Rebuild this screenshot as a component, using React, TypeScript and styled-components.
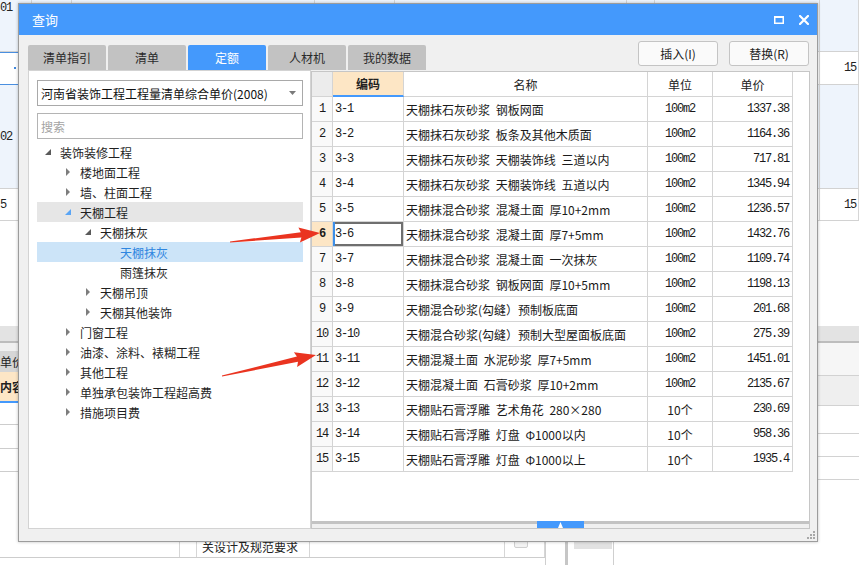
import styled, { createGlobalStyle } from "styled-components";

const MONO = `"Liberation Mono", "DejaVu Sans Mono", monospace`;
const CJK = `"Noto Sans CJK SC", "Noto Sans", sans-serif`;
const BLUE = "#4499fc";

const GlobalStyle = createGlobalStyle`
  html, body { margin: 0; padding: 0; background: #fff; }
  body {
    font-family: ${CJK};
    font-size: 12px;
    color: #1f1f1f;
  }
  * { box-sizing: border-box; }
  input::placeholder { color: #a3a3a3; }
`;

const Screen = styled.div`
  position: relative;
  width: 859px;
  height: 565px;
  overflow: hidden;
  background: #fff;
`;

/* ---------- the app behind the dialog ---------- */

const BgRow = styled.div<{ $h: number; $bg?: string }>`
  display: flex;
  height: ${p => p.$h}px;
  background: ${p => p.$bg || "#fff"};
  border-bottom: 1px solid #d2d2d2;
`;

const BgCell = styled.div<{ $w: number; $align?: string; $top?: boolean; $sel?: boolean }>`
  flex: 0 0 ${p => p.$w}px;
  display: flex;
  align-items: ${p => (p.$top ? "flex-start" : "center")};
  justify-content: ${p => p.$align || "flex-start"};
  padding: ${p => (p.$top ? "1px 2px 0 0" : "0 2px 0 0")};
  border-right: 1px solid #d6d6d6;
  font-family: ${MONO};
  font-size: 12px;
  letter-spacing: -1.2px;
  color: #222;
  overflow: hidden;
  white-space: nowrap;
  ${p => p.$sel && "box-shadow: inset 0 1px 0 #4a8fe0, 0 1px 0 #4a8fe0;"}
`;

const BlueDot = styled.i`
  display: block;
  width: 2px;
  height: 2px;
  margin: 0 0 0 14px;
  background: #3d86dc;
`;

const Spacer = styled.div<{ $h: number }>`
  height: ${p => p.$h}px;
`;

const Band = styled.div`
  height: 17px;
  background: #e3e3e3;
  border-bottom: 2px solid #bdbdbd;
`;

const Lower = styled.div`
  display: flex;
  height: 222px;
`;

const LeftPane = styled.div`
  flex: 0 0 546px;
  display: flex;
  flex-direction: column;
  border-right: 1px solid #cfcfcf;
`;

const PaneStrip = styled.div`
  height: 8px;
  background: #f0f0f0;
`;

const PaneHead = styled.div<{ $kind: "tab" | "col" }>`
  display: flex;
  align-items: center;
  height: ${p => (p.$kind === "tab" ? 21 : 31)}px;
  background: ${p => (p.$kind === "tab" ? "#d6d6d6" : "#fde6c6")};
  border-bottom: ${p => (p.$kind === "tab" ? "none" : `2px solid ${BLUE}`)};
  font-size: 12px;
  font-weight: ${p => (p.$kind === "tab" ? 400 : 700)};
  color: #222;
`;

const LRow = styled.div<{ $h: number }>`
  display: flex;
  height: ${p => p.$h}px;
  align-items: stretch;
  border-bottom: 1px solid #cdcdcd;
`;

const LCell = styled.div<{ $w: number; $end?: boolean }>`
  flex: 0 0 ${p => p.$w}px;
  display: flex;
  align-items: ${p => (p.$end ? "flex-end" : "center")};
  padding: 0 0 2px 5px;
  border-right: 1px solid #d6d6d6;
  font-size: 12px;
  color: #222;
  white-space: nowrap;
  overflow: hidden;
`;

const MiniBtn = styled.div`
  width: 14px;
  height: 14px;
  margin: 0 0 7px 4px;
  border: 1px solid #cfcfcf;
  border-radius: 2px;
  background: #f3f3f3;
`;

const Gutter = styled.div`
  flex: 0 0 19px;
`;

const VLine = styled.div`
  flex: 0 0 3px;
  background: #c6c6c6;
`;

const ScrollCol = styled.div`
  flex: 0 0 46px;
  padding: 0 1px 0 6px;
  border-right: 1px solid #cfcfcf;
`;

const Thumb = styled.div`
  height: 206px;
  background: #e2e2e2;
`;

const RightPane = styled.div`
  flex: 1;
  display: flex;
  flex-direction: column;
`;

/* ---------- dialog ---------- */

const Dialog = styled.div`
  position: absolute;
  left: 18px;
  top: 3px;
  width: 800px;
  height: 539px;
  display: flex;
  flex-direction: column;
  background: #f0f0f0;
  border: 1px solid #9c9c9c;
  box-shadow: 0 0 3px rgba(0, 0, 0, 0.25);
`;

const TitleBar = styled.div`
  height: 31px;
  display: flex;
  align-items: center;
  justify-content: space-between;
  padding: 0 8px 0 13px;
  background: ${BLUE};
  color: #fff;
  font-size: 13px;
`;

const WinBtns = styled.div`
  display: flex;
  align-items: center;
  gap: 15px;
`;

const TopBar = styled.div`
  height: 35px;
  display: flex;
  align-items: flex-end;
  padding: 0 8px 0 9px;
`;

const Tabs = styled.div`
  display: flex;
  gap: 2px;
`;

const Tab = styled.div<{ $active?: boolean }>`
  width: 78px;
  height: 25px;
  display: flex;
  align-items: center;
  justify-content: center;
  border-radius: 2px 2px 0 0;
  background: ${p => (p.$active ? BLUE : "#c2c2c2")};
  color: ${p => (p.$active ? "#fff" : "#2a2a2a")};
  font-size: 12px;
`;

const Actions = styled.div`
  display: flex;
  gap: 11px;
  margin: 0 0 4px auto;
`;

const Btn = styled.button`
  width: 80px;
  height: 25px;
  padding: 0;
  border: 1px solid #c4c4c4;
  border-radius: 3px;
  background: #fafafa;
  color: #222;
  font-family: ${CJK};
  font-size: 12px;
`;

const Content = styled.div`
  height: 459px;
  display: flex;
  padding: 0 7px 0 9px;
`;

const LeftPanel = styled.div`
  flex: 0 0 283px;
  display: flex;
  flex-direction: column;
  padding: 9px 7px 0 8px;
  background: #fff;
  border: 1px solid #d3d3d3;
`;

const Select = styled.div`
  height: 26px;
  display: flex;
  align-items: center;
  justify-content: space-between;
  padding: 0 6px 0 3px;
  border: 1px solid #a9a9a9;
  font-size: 12px;
  color: #111;
`;

const Search = styled.input`
  height: 26px;
  margin-top: 7px;
  padding: 0 3px;
  border: 1px solid #b4b4b4;
  outline: none;
  font-family: ${CJK};
  font-size: 12px;
`;

const Tree = styled.div`
  margin-top: 3px;
  display: flex;
  flex-direction: column;
`;

const TreeRow = styled.div<{ $level: number; $state?: "gray" | "blue" }>`
  height: 20px;
  display: flex;
  align-items: center;
  padding-left: ${p => 8 + p.$level * 20}px;
  background: ${p => (p.$state === "gray" ? "#e6e6e6" : p.$state === "blue" ? "#cce4f8" : "transparent")};
  color: ${p => (p.$state === "blue" ? "#2f86e0" : "#1f1f1f")};
  font-size: 12px;
  white-space: nowrap;
`;

const Toggle = styled.span`
  flex: 0 0 15px;
  display: flex;
  align-items: center;
`;

const GridPanel = styled.div`
  flex: 1;
  margin-top: 1px;
  display: flex;
  flex-direction: column;
  background: #fff;
  border: 1px solid #c6c6c6;
`;

const COLS = "21px 71px 244px 65px 80px";

const GridRow = styled.div`
  display: grid;
  grid-template-columns: ${COLS};
  height: 25px;
`;

const HeadCell = styled.div<{ $kind?: "num" | "sort" }>`
  display: flex;
  align-items: center;
  justify-content: center;
  border-right: 1px solid #d4d4d4;
  border-bottom: ${p => (p.$kind === "sort" ? `2px solid ${BLUE}` : "1px solid #d4d4d4")};
  background: ${p => (p.$kind === "num" ? "#ececec" : p.$kind === "sort" ? "#fde6c5" : "#fff")};
  font-weight: ${p => (p.$kind === "sort" ? 700 : 400)};
  font-size: 12px;
  color: #222;
`;

const Cell = styled.div<{ $align?: "left" | "center" | "right"; $mono?: boolean; $kind?: "num" | "numSel" | "sel" }>`
  display: flex;
  align-items: center;
  justify-content: ${p => (p.$align === "right" ? "flex-end" : p.$align === "center" ? "center" : "flex-start")};
  padding: 0 ${p => (p.$align === "right" ? 3 : 0)}px 0 ${p => (p.$align === "left" ? 2 : 0)}px;
  border-right: 1px solid #d4d4d4;
  border-bottom: 1px solid #d4d4d4;
  background: ${p => (p.$kind === "num" ? "#f9f9f9" : p.$kind === "numSel" ? "#fde6c5" : "#fff")};
  font-family: ${p => (p.$mono ? MONO : CJK)};
  font-size: 12px;
  letter-spacing: ${p => (p.$mono ? "-1.2px" : "0")};
  word-spacing: 3px;
  font-weight: ${p => (p.$kind === "numSel" ? 700 : 400)};
  color: #1a1a1a;
  white-space: pre;
  overflow: hidden;
  ${p =>
    p.$kind === "sel" &&
    `box-shadow: inset 2px 0 0 #3d8fe8, inset 0 2px 0 #6f6f6f, inset -2px 0 0 #6f6f6f, inset 0 -2px 0 #6f6f6f;`}
`;

const MonoUnit = styled.span`
  font-family: ${MONO};
  letter-spacing: -1.2px;
`;

const Filler = styled.div`
  flex: 1;
`;

const SplitBar = styled.div`
  height: 7px;
  display: flex;
  justify-content: center;
  background: linear-gradient(#c3c3c3 0 3px, #f0f0f0 3px);
`;

const Handle = styled.div`
  width: 47px;
  display: flex;
  align-items: center;
  justify-content: center;
  background: ${BLUE};
`;

const Footer = styled.div`
  height: 12px;
  display: flex;
  justify-content: flex-end;
  align-items: flex-end;
  padding: 0 2px 2px 0;
`;

const Overlay = styled.svg`
  position: absolute;
  left: 0;
  top: 0;
  pointer-events: none;
`;

/* ---------- data ---------- */

const TOP_COLS = [32, 40, 243, 80, 232, 28, 165, 39];
const LOW_COLS = [180, 17, 113, 195, 40];

const tabs = ["清单指引", "清单", "定额", "人材机", "我的数据"];

type Node = { level: number; text: string; kind: "open" | "closed" | "leaf"; state?: "gray" | "blue" };

const tree: Node[] = [
  { level: 0, text: "装饰装修工程", kind: "open" },
  { level: 1, text: "楼地面工程", kind: "closed" },
  { level: 1, text: "墙、柱面工程", kind: "closed" },
  { level: 1, text: "天棚工程", kind: "open", state: "gray" },
  { level: 2, text: "天棚抹灰", kind: "open" },
  { level: 3, text: "天棚抹灰", kind: "leaf", state: "blue" },
  { level: 3, text: "雨篷抹灰", kind: "leaf" },
  { level: 2, text: "天棚吊顶", kind: "closed" },
  { level: 2, text: "天棚其他装饰", kind: "closed" },
  { level: 1, text: "门窗工程", kind: "closed" },
  { level: 1, text: "油漆、涂料、裱糊工程", kind: "closed" },
  { level: 1, text: "其他工程", kind: "closed" },
  { level: 1, text: "单独承包装饰工程超高费", kind: "closed" },
  { level: 1, text: "措施项目费", kind: "closed" },
];

const rows: [string, string, string, string][] = [
  ["3-1", "天棚抹石灰砂浆 钢板网面", "100m2", "1337.38"],
  ["3-2", "天棚抹石灰砂浆 板条及其他木质面", "100m2", "1164.36"],
  ["3-3", "天棚抹石灰砂浆 天棚装饰线 三道以内", "100m2", "717.81"],
  ["3-4", "天棚抹石灰砂浆 天棚装饰线 五道以内", "100m2", "1345.94"],
  ["3-5", "天棚抹混合砂浆 混凝土面 厚10+2mm", "100m2", "1236.57"],
  ["3-6", "天棚抹混合砂浆 混凝土面 厚7+5mm", "100m2", "1432.76"],
  ["3-7", "天棚抹混合砂浆 混凝土面 一次抹灰", "100m2", "1109.74"],
  ["3-8", "天棚抹混合砂浆 钢板网面 厚10+5mm", "100m2", "1198.13"],
  ["3-9", "天棚混合砂浆(勾缝）预制板底面", "100m2", "201.68"],
  ["3-10", "天棚混合砂浆(勾缝）预制大型屋面板底面", "100m2", "275.39"],
  ["3-11", "天棚混凝土面 水泥砂浆 厚7+5mm", "100m2", "1451.01"],
  ["3-12", "天棚混凝土面 石膏砂浆 厚10+2mm", "100m2", "2135.67"],
  ["3-13", "天棚贴石膏浮雕 艺术角花 280×280", "10个", "230.69"],
  ["3-14", "天棚贴石膏浮雕 灯盘 Φ1000以内", "10个", "958.36"],
  ["3-15", "天棚贴石膏浮雕 灯盘 Φ1000以上", "10个", "1935.4"],
];

const SELECTED = 5;

// red annotation arrow, tail -> tip
function arrow(tx: number, ty: number, hx: number, hy: number) {
  const dx = hx - tx;
  const dy = hy - ty;
  const len = Math.hypot(dx, dy);
  const ux = dx / len;
  const uy = dy / len;
  const nx = -uy;
  const ny = ux;
  const headLen = 19;
  const headW = 7.5;
  const shaftW = 2.6;
  const tailW = 0.5;
  const bx = hx - ux * headLen;
  const by = hy - uy * headLen;
  const pts = [
    [tx + nx * tailW, ty + ny * tailW],
    [bx + nx * shaftW, by + ny * shaftW],
    [bx - ux * 2 + nx * headW, by - uy * 2 + ny * headW],
    [hx, hy],
    [bx - ux * 2 - nx * headW, by - uy * 2 - ny * headW],
    [bx - nx * shaftW, by - ny * shaftW],
    [tx - nx * tailW, ty - ny * tailW],
  ];
  return pts.map(p => p.map(v => v.toFixed(1)).join(",")).join(" ");
}

function TreeToggle({ node }: { node: Node }) {
  if (node.kind === "leaf") return <Toggle />;
  if (node.kind === "open")
    return (
      <Toggle>
        <svg width="6" height="6" viewBox="0 0 6 6">
          <polygon points="6,0 6,6 0,6" fill={node.state === "gray" ? "#5aa5f5" : "#5a5a5a"} />
        </svg>
      </Toggle>
    );
  return (
    <Toggle>
      <svg width="5" height="8" viewBox="0 0 5 8" style={{ marginLeft: 1 }}>
        <polygon points="0,0 4,4 0,8" fill="#7d7d7d" />
      </svg>
    </Toggle>
  );
}

function Background() {
  return (
    <>
      <BgRow $h={52} $bg="#eef4fc">
        {TOP_COLS.map((w, i) => (
          <BgCell key={i} $w={w} $top>
            {i === 0 && "01"}
          </BgCell>
        ))}
      </BgRow>
      <BgRow $h={33}>
        {TOP_COLS.map((w, i) => (
          <BgCell key={i} $w={w} $sel={i === 0} $align={i === 7 ? "flex-end" : undefined}>
            {i === 0 && <BlueDot />}
            {i === 7 && "15"}
          </BgCell>
        ))}
      </BgRow>
      <BgRow $h={104} $bg="#eef4fc">
        {TOP_COLS.map((w, i) => (
          <BgCell key={i} $w={w}>
            {i === 0 && "02"}
          </BgCell>
        ))}
      </BgRow>
      <BgRow $h={32}>
        {TOP_COLS.map((w, i) => (
          <BgCell key={i} $w={w} $align={i === 7 ? "flex-end" : undefined}>
            {i === 0 && "5"}
            {i === 7 && "15"}
          </BgCell>
        ))}
      </BgRow>
      <Spacer $h={105} />
      <Band />
      <Lower>
        <LeftPane>
          <PaneStrip />
          <PaneHead $kind="tab">单价</PaneHead>
          <PaneHead $kind="col">内容</PaneHead>
          {[22, 24, 23].map((h, r) => (
            <LRow key={r} $h={h}>
              {LOW_COLS.map((w, i) => (
                <LCell key={i} $w={w} />
              ))}
            </LRow>
          ))}
          <LRow $h={86}>
            <LCell $w={180} />
            <LCell $w={17} />
            <LCell $w={113} $end>
              关设计及规范要求
            </LCell>
            <LCell $w={195} />
            <LCell $w={40} $end>
              <MiniBtn />
            </LCell>
          </LRow>
        </LeftPane>
        <Gutter />
        <VLine />
        <ScrollCol>
          <Thumb />
        </ScrollCol>
        <RightPane>
          <BgRow $h={33} $bg="#f6f6f6" />
          <BgRow $h={30} $bg="#efefef" />
          <BgRow $h={28} />
          <BgRow $h={23} />
          <BgRow $h={23} />
        </RightPane>
      </Lower>
    </>
  );
}

export default function App() {
  return (
    <Screen>
      <GlobalStyle />
      <Background />

      <Dialog>
        <TitleBar>
          <span>查询</span>
          <WinBtns>
            <svg width="10" height="8" viewBox="0 0 10 8">
              <rect x="0.75" y="1" width="8.5" height="6.25" fill="none" stroke="#fff" strokeWidth="1.5" />
              <rect x="0" y="0" width="10" height="2" fill="#fff" />
            </svg>
            <svg width="10" height="10" viewBox="0 0 10 10">
              <path d="M1 1 L9 9 M9 1 L1 9" stroke="#fff" strokeWidth="2.2" strokeLinecap="square" />
            </svg>
          </WinBtns>
        </TitleBar>

        <TopBar>
          <Tabs>
            {tabs.map(t => (
              <Tab key={t} $active={t === "定额"}>
                {t}
              </Tab>
            ))}
          </Tabs>
          <Actions>
            <Btn>插入(I)</Btn>
            <Btn>替换(R)</Btn>
          </Actions>
        </TopBar>

        <Content>
          <LeftPanel>
            <Select>
              <span>河南省装饰工程工程量清单综合单价(2008)</span>
              <svg width="7" height="4" viewBox="0 0 7 4">
                <polygon points="0,0 7,0 3.5,4" fill="#7a7a7a" />
              </svg>
            </Select>
            <Search placeholder="搜索" />
            <Tree>
              {tree.map((n, i) => (
                <TreeRow key={i} $level={n.level} $state={n.state}>
                  <TreeToggle node={n} />
                  {n.text}
                </TreeRow>
              ))}
            </Tree>
          </LeftPanel>

          <GridPanel>
            <GridRow>
              <HeadCell $kind="num" />
              <HeadCell $kind="sort">编码</HeadCell>
              <HeadCell>名称</HeadCell>
              <HeadCell>单位</HeadCell>
              <HeadCell>单价</HeadCell>
            </GridRow>
            {rows.map(([code, name, unit, price], i) => (
              <GridRow key={code}>
                <Cell $align="center" $mono $kind={i === SELECTED ? "numSel" : "num"}>
                  {i + 1}
                </Cell>
                <Cell $align="left" $mono $kind={i === SELECTED ? "sel" : undefined}>
                  {code}
                </Cell>
                <Cell $align="left">{name}</Cell>
                <Cell $align="center">{unit === "100m2" ? <MonoUnit>{unit}</MonoUnit> : unit}</Cell>
                <Cell $align="right" $mono>
                  {price}
                </Cell>
              </GridRow>
            ))}
            <Filler />
            <SplitBar>
              <Handle>
                <svg width="5" height="6" viewBox="0 0 5 6">
                  <polygon points="2.5,0 5,6 0,6" fill="#fff" />
                </svg>
              </Handle>
            </SplitBar>
          </GridPanel>
        </Content>

        <Footer>
          <svg width="8" height="8" viewBox="0 0 8 8">
            {[
              [6, 0],
              [3, 3],
              [6, 3],
              [0, 6],
              [3, 6],
              [6, 6],
            ].map(([x, y], i) => (
              <rect key={i} x={x} y={y} width="2" height="2" fill="#a8a8a8" />
            ))}
          </svg>
        </Footer>
      </Dialog>

      <Overlay width="859" height="565" viewBox="0 0 859 565">
        <polygon points={arrow(230, 242, 320, 233)} fill="#ea3420" />
        <polygon points={arrow(222, 376, 316, 355)} fill="#ea3420" />
      </Overlay>
    </Screen>
  );
}
